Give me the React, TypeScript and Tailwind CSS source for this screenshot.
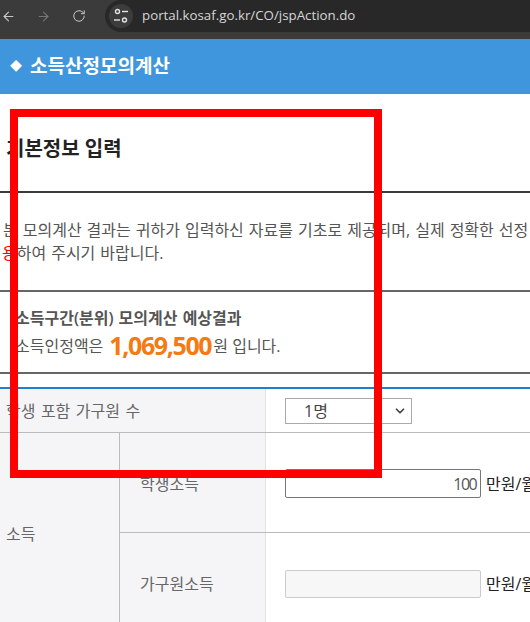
import { ArrowLeft, ArrowRight, RotateCw, ChevronDown } from "lucide-react";

const kr = "font-['Open_Sans','Noto_Sans_CJK_KR',sans-serif]";

function TuneIcon() {
  return (
    <svg viewBox="0 0 16 16" className="h-4 w-4" fill="none" stroke="#e3e3e3" strokeWidth="1.4">
      <circle cx="4.5" cy="3.5" r="2" />
      <path d="M9 3.5h6" />
      <path d="M1 12h6" />
      <circle cx="11.5" cy="12" r="2" />
    </svg>
  );
}

export default function App() {
  return (
    <div className={`relative h-[622px] w-[530px] overflow-hidden bg-white ${kr}`}>
      {/* Browser toolbar */}
      <div className="flex h-[39px] items-start bg-[#3b3b3b]">
        <div className="flex h-[32px] w-[105px] items-center text-[#c7c7c7]">
          <ArrowLeft className="ml-px h-[15px] w-[15px]" strokeWidth={1.7} />
          <ArrowRight className="ml-[20px] h-[15px] w-[15px] text-[#767676]" strokeWidth={1.7} />
          <RotateCw className="ml-[21px] h-[14px] w-[14px]" strokeWidth={1.7} />
        </div>
        <div className="flex h-[32px] flex-1 items-center rounded-l-full bg-[#282828] pl-[4px]">
          <div className="flex h-[24px] w-[24px] items-center justify-center rounded-full bg-[#3c3c3c]">
            <TuneIcon />
          </div>
          <span className="ml-[9px] text-[13.3px] text-[#d6d6d6]">portal.kosaf.go.kr/CO/jspAction.do</span>
        </div>
      </div>

      {/* Page title */}
      <div className="flex h-[55px] items-center bg-[#4096dc] pl-[10px] text-white">
        <span className="text-[12px] leading-none">◆</span>
        <h1 className="ml-[8px] text-[19px] font-bold">소득산정모의계산</h1>
      </div>

      <h2 className="ml-[6px] mt-[42px] text-[20px] leading-[26px] font-semibold whitespace-nowrap text-[#222]">
        기본정보 입력
      </h2>

      <div className="mt-[29px] h-[2px] bg-[#3a3a3a]" />

      <div className="whitespace-nowrap pt-[26px] pb-[25px] text-[16px] leading-[23px] text-[#555]">
        <p className="ml-[3px] [word-spacing:0.85px]">
          본 모의계산 결과는 귀하가 입력하신 자료를 기초로 제공되며, 실제 정확한 선정
        </p>
        <p className="ml-[2px] [word-spacing:0.85px]">
          <span className="text-[#ff0000]">용</span>하여 주시기 바랍니다.
        </p>
      </div>

      <div className="h-[2px] bg-[#666]" />

      <div className="whitespace-nowrap pl-[15px] text-[16px] text-[#555]">
        <p className="pt-[15px] leading-[22px] font-semibold [word-spacing:1px]">소득구간(분위) 모의계산 예상결과</p>
        <p className="flex h-[34px] items-center">
          <span>소득인정액은</span>
          <strong className="ml-[6px] mr-[2px] text-[25px] font-bold tracking-[-0.055em] text-[#f47a12]">1,069,500</strong>
          <span>원 입니다.</span>
        </p>
      </div>

      <div className="mt-[9px] h-[2px] bg-[#666]" />

      {/* Form table */}
      <div className="mt-[13px] border-t-2 border-[#1f7fcf] text-[16px] text-[#666]">
        <div className="flex h-[44px] border-b border-[#bbb]">
          <div className="flex w-[266px] shrink-0 items-center border-r border-[#e2e2e2] bg-[#f5f5f7] pl-[6px] whitespace-nowrap [word-spacing:1.3px]">
            학생 포함 가구원 수
          </div>
          <div className="flex items-center pl-[19px]">
            <div className="flex h-[26px] w-[127px] items-center justify-between border border-[#aaa] bg-white pl-[18px] pr-[4px] text-[#444]">
              <span>1명</span>
              <ChevronDown className="h-[14px] w-[14px] text-[#444]" strokeWidth={3} />
            </div>
          </div>
        </div>

        <div className="flex">
          <div className="flex w-[120px] shrink-0 items-center border-r border-[#bbb] bg-[#f5f5f7] pl-[6px]">소득</div>
          <div className="min-w-0 flex-1">
            <div className="flex h-[100px] border-b border-[#bbb]">
              <div className="flex w-[146px] shrink-0 items-center border-r border-[#e2e2e2] bg-[#f5f5f7] pl-[20px] pt-[2px]">
                학생소득
              </div>
              <div className="flex items-center whitespace-nowrap pl-[19px] pt-[2px]">
                <div className="flex h-[29px] w-[196px] shrink-0 items-center justify-end rounded-[2px] border border-[#767676] bg-white pr-[4px] text-[16px] tracking-[-0.1em] text-[#555]">
                  100
                </div>
                <span className="ml-[5px] text-[#222]">만원/월</span>
              </div>
            </div>
            <div className="flex h-[101px]">
              <div className="flex w-[146px] shrink-0 items-center border-r border-[#e2e2e2] bg-[#f5f5f7] pl-[20px] pt-px">
                가구원소득
              </div>
              <div className="flex items-center whitespace-nowrap pl-[19px] pt-px">
                <div className="h-[28px] w-[196px] shrink-0 rounded-[2px] border border-[#ccc] bg-[#f7f7f7]" />
                <span className="ml-[5px] text-[#222]">만원/월</span>
              </div>
            </div>
          </div>
        </div>
      </div>

      {/* Red annotation box drawn over the page */}
      <div className="absolute left-[10px] top-[109px] h-[369px] w-[372px] border-[8px] border-[#ff0000]" />
    </div>
  );
}
